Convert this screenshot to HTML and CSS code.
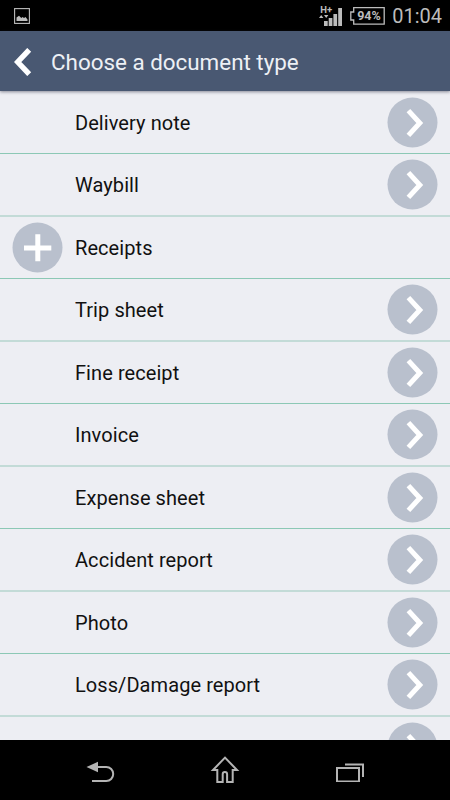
FILE: index.html
```html
<!DOCTYPE html>
<html lang="en">
<head>
<meta charset="utf-8">
<title>Choose a document type</title>
<link rel="stylesheet" href="styles.css">
</head>
<body>
<div class="screen">
  <div class="status">
    <svg class="status-photo" width="16" height="16" viewBox="0 0 16 16"><rect x=".6" y=".6" width="14.8" height="14.8" fill="none" stroke="#bcbcbc" stroke-width="1.1"/><path d="M2.5 13V9.5L5 7.8 7.3 10 8.5 9 10 10 11.5 9 13.5 11.5V13Z" fill="#bcbcbc"/></svg>
    <div class="status-right">
      <div class="signal">
        <span class="network">H+</span>
        <svg width="25" height="20" viewBox="0 0 25 20" fill="#bcbcbc"><path d="M0 12 2.2 9 4.4 12ZM5 9H9.4L7.2 12ZM5 15H8.7V20H5ZM9.7 12H13.4V20H9.7ZM14.4 8H18.1V20H14.4ZM19.2 2H23V20H19.2Z"/></svg>
      </div>
      <div class="battery">
        <svg width="35" height="18" viewBox="0 0 35 18" fill="none" stroke="#bcbcbc" stroke-width="1.3"><path d="M3.7.7H34.2V17.2H3.7V13H.8V5H3.7Z"/></svg>
        <span class="level">94%</span>
      </div>
      <span class="clock">01:04</span>
    </div>
  </div>
  <header class="header">
    <svg class="back" width="18" height="28" viewBox="0 0 18 28" fill="none" stroke="#fff" stroke-width="5.4"><path d="M15.2 1.8 3.7 14 15.2 26.2"/></svg>
    <h1 class="title">Choose a document type</h1>
  </header>
  <main class="list">
    <div class="row"><span class="label">Delivery note</span><svg class="button" viewBox="0 0 51 51"><circle cx="25.5" cy="25.5" r="25"/><path d="M21.4 13.6 32.8 26 21.4 38.4"/></svg></div>
    <div class="row"><span class="label">Waybill</span><svg class="button" viewBox="0 0 51 51"><circle cx="25.5" cy="25.5" r="25"/><path d="M21.4 13.6 32.8 26 21.4 38.4"/></svg></div>
    <div class="row group"><svg class="button" viewBox="0 0 51 51"><circle cx="25.5" cy="25.5" r="25"/><path d="M12 26H39.3M25.8 12.3V39.3"/></svg><span class="label">Receipts</span></div>
    <div class="row"><span class="label">Trip sheet</span><svg class="button" viewBox="0 0 51 51"><circle cx="25.5" cy="25.5" r="25"/><path d="M21.4 13.6 32.8 26 21.4 38.4"/></svg></div>
    <div class="row"><span class="label">Fine receipt</span><svg class="button" viewBox="0 0 51 51"><circle cx="25.5" cy="25.5" r="25"/><path d="M21.4 13.6 32.8 26 21.4 38.4"/></svg></div>
    <div class="row"><span class="label">Invoice</span><svg class="button" viewBox="0 0 51 51"><circle cx="25.5" cy="25.5" r="25"/><path d="M21.4 13.6 32.8 26 21.4 38.4"/></svg></div>
    <div class="row"><span class="label">Expense sheet</span><svg class="button" viewBox="0 0 51 51"><circle cx="25.5" cy="25.5" r="25"/><path d="M21.4 13.6 32.8 26 21.4 38.4"/></svg></div>
    <div class="row"><span class="label">Accident report</span><svg class="button" viewBox="0 0 51 51"><circle cx="25.5" cy="25.5" r="25"/><path d="M21.4 13.6 32.8 26 21.4 38.4"/></svg></div>
    <div class="row"><span class="label">Photo</span><svg class="button" viewBox="0 0 51 51"><circle cx="25.5" cy="25.5" r="25"/><path d="M21.4 13.6 32.8 26 21.4 38.4"/></svg></div>
    <div class="row"><span class="label">Loss/Damage report</span><svg class="button" viewBox="0 0 51 51"><circle cx="25.5" cy="25.5" r="25"/><path d="M21.4 13.6 32.8 26 21.4 38.4"/></svg></div>
    <div class="row"><span class="label">Id card</span><svg class="button" viewBox="0 0 51 51"><circle cx="25.5" cy="25.5" r="25"/><path d="M21.4 13.6 32.8 26 21.4 38.4"/></svg></div>
  </main>
  <nav class="nav">
    <svg width="30" height="24" viewBox="0 0 30 24"><path d="M1.5 9 13 3.8V14.2Z" fill="#b4b4b4"/><path d="M12 9H21.3A6.9 7 0 0 1 21.3 23H7" fill="none" stroke="#b4b4b4" stroke-width="2"/></svg>
    <svg width="30" height="30" viewBox="0 0 30 30" fill="none" stroke="#b4b4b4" stroke-width="2"><path d="M15 2.6 3 15H7.3V27H12.7V19.2A2.2 2.2 0 0 1 17.1 19.2V27H22.7V15H27Z"/></svg>
    <svg width="30" height="24" viewBox="0 0 30 24" fill="none" stroke="#b4b4b4" stroke-width="2"><path d="M2 10H24V23.5H2ZM10 6.5H28V19"/></svg>
  </nav>
</div>
</body>
</html>
```
FILE: styles.css
```css
body {
  margin: 0;
  font-family: Roboto, "Liberation Sans", sans-serif;
}

svg {
  display: block;
}

.screen {
  width: 450px;
  height: 800px;
  display: flex;
  flex-direction: column;
  overflow: hidden;
  background: #000;
}

.status {
  height: 31px;
  flex: none;
  box-sizing: border-box;
  padding: 0 8px 0 14px;
  display: flex;
  align-items: center;
  justify-content: space-between;
  color: #bcbcbc;
}

.status-right {
  display: flex;
  align-items: center;
}

.signal {
  position: relative;
  margin-right: 6px;
}

.network {
  position: absolute;
  left: 1px;
  top: -1px;
  font-size: 9.5px;
  line-height: 10px;
  font-weight: 700;
}

.battery {
  position: relative;
  margin-right: 7px;
}

.level {
  position: absolute;
  left: 7px;
  top: 0;
  font-size: 12.5px;
  line-height: 18px;
  font-weight: 700;
}

.clock {
  font-size: 20px;
  line-height: 30px;
}

.header {
  height: 60px;
  flex: none;
  display: flex;
  align-items: center;
  background: #495872;
  box-shadow: 0 1px 3px rgba(40, 40, 60, 0.5);
  position: relative;
  z-index: 1;
}

.back {
  margin: 2px 19px 0 14px;
}

.title {
  margin: 2px 0 0;
  font-size: 22.4px;
  font-weight: 400;
  color: #edf0f5;
}

.list {
  height: 649px;
  flex: none;
  box-sizing: border-box;
  padding-top: 1px;
  overflow: hidden;
  background: #edeef3;
}

.row {
  height: 62px;
  box-sizing: border-box;
  padding: 0 12px 0 75px;
  border-bottom: 1px solid #8cc8b5;
  display: flex;
  align-items: center;
  color: #111;
}

.row:nth-child(even) {
  height: 63px;
  border-bottom: 2px solid #c3dbd7;
}

.group {
  padding-left: 12px;
}

.label {
  flex: 1;
  font-size: 20px;
  line-height: 24px;
  letter-spacing: 0.07px;
  padding-top: 1px;
}

.button {
  width: 51px;
  height: 51px;
  fill: none;
  stroke: #fff;
  stroke-width: 5;
}

.button circle {
  fill: #b9c0cd;
  stroke: none;
}

.group .button {
  margin-right: 12px;
}

.nav {
  height: 60px;
  flex: none;
  display: flex;
  align-items: center;
  justify-content: space-between;
  padding: 0 85px;
}
```
